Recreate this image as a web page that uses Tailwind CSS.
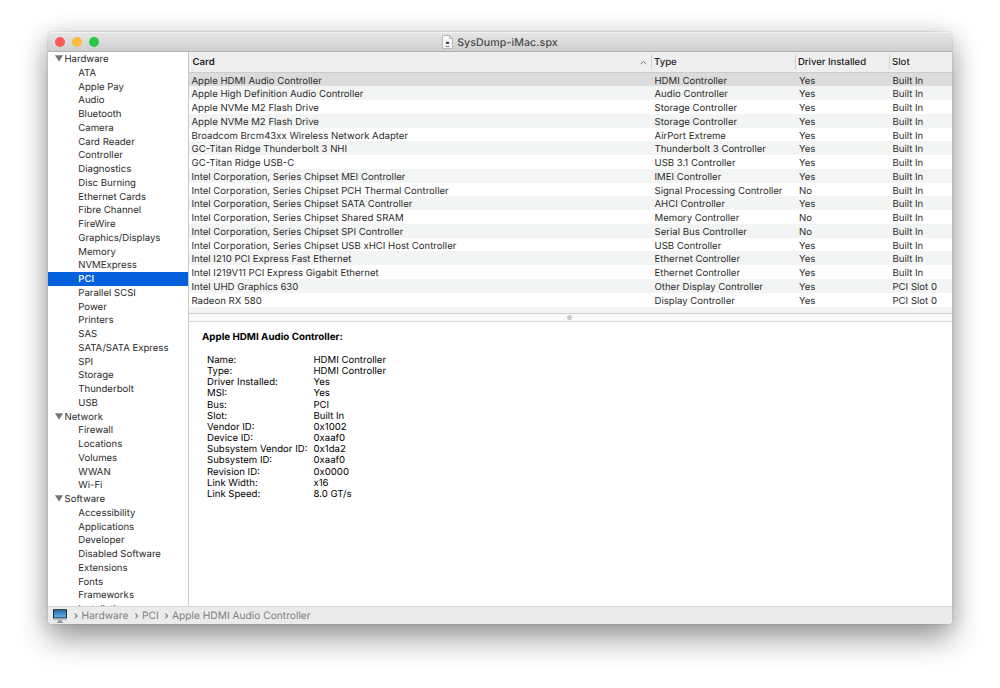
<!DOCTYPE html>
<html lang="en">
<head>
  <meta charset="UTF-8">
  <meta name="viewport" content="width=device-width, initial-scale=1.0">
  <title>SysDump-iMac.spx</title>
  <script src="https://cdn.jsdelivr.net/npm/@tailwindcss/browser@4"></script>
  <style>
    body {
      font-family: Inter, 'Liberation Sans', sans-serif;
      text-rendering: geometricPrecision;
    }
  </style>
</head>
<body class="bg-white w-[1000px] h-[688px] overflow-hidden pl-[48px] pt-[32px] text-[9.58px] text-[#2b2b2b]">
  <div class="w-[904px] h-[592px] rounded-[4px] shadow-[0_0_1px_rgba(0,0,0,0.55),0_0_22px_rgba(0,0,0,0.1),0_14px_30px_rgba(0,0,0,0.4)]">
    <div class="w-full h-full rounded-[4px] overflow-hidden bg-white flex flex-col">
      <header class="h-[20px] shrink-0 relative flex items-center justify-center gap-[4px] bg-linear-to-b from-[#e6e6e6] to-[#cfcfcf] border-t border-t-[#f3f3f3] border-b border-b-[#b1b1b1]">
        <div class="absolute left-[6.8px] top-[4px] flex gap-[6.7px]">
          <span class="size-[10.4px] rounded-full bg-[#fc5b57]"></span>
          <span class="size-[10.4px] rounded-full bg-[#fdbb40]"></span>
          <span class="size-[10.4px] rounded-full bg-[#2ac84a]"></span>
        </div>
        <svg class="w-[11px] h-[14px]" viewBox="0 0 11 14">
          <path d="M.5 .5h6.8l3.2 3.2v9.8H.5z" fill="#f8f8f8" stroke="#a8a8a8" stroke-width=".7"/>
          <path d="M7.3 .5v3.2h3.2z" fill="#cfcfcf" stroke="#a8a8a8" stroke-width=".5"/>
          <rect x="4" y="6.8" width="3" height="2" fill="#333"/>
          <path d="M3.6 11.5h4" stroke="#777" stroke-width="1"/>
        </svg>
        <h1 class="pt-[2px] text-[10.6px] font-medium text-[#4a4a4a] tracking-[0.1px]">SysDump-iMac.spx</h1>
      </header>

      <div class="flex-1 min-h-0 flex">
        <nav id="sidebar" class="w-[140px] shrink-0 overflow-hidden"></nav>

        <main class="flex-1 min-w-0 flex flex-col border-l border-[#c8c8c8]">
          <section class="h-[262px] shrink-0 overflow-hidden border-b border-[#cfcfcf]">
            <div class="h-[20.5px] flex items-center bg-[#efefef] border-b border-[#cccccc] font-medium text-[#222]">
              <div class="w-[462px] h-[15px] pt-[2px] pl-[3.5px] pr-[4px] flex items-center justify-between font-semibold">
                Card
                <svg class="w-[7px] h-[5px]" viewBox="0 0 7 5"><path d="M.7 4.2L3.5 1.2l2.8 3" fill="none" stroke="#777" stroke-width="1"/></svg>
              </div>
              <div class="w-[144px] h-[15px] pt-[2px] pl-[2px] flex items-center border-l border-[#d2d2d2]">Type</div>
              <div class="w-[94px] h-[15px] pt-[2px] pl-[2px] tracking-[-0.06px] flex items-center border-l border-[#d2d2d2]">Driver Installed</div>
              <div class="flex-1 h-[15px] pt-[2px] pl-[2px] flex items-center border-l border-[#d2d2d2]">Slot</div>
            </div>
            <div id="cards"></div>
          </section>
          <div class="h-[8px] shrink-0 flex justify-center pt-px pr-[2px] bg-[#fafafa] border-b border-[#d6d6d6]">
            <span class="size-[5px] rounded-full bg-[#c9c9c9]"></span>
          </div>
          <section class="flex-1 pl-[13px] pt-[8.5px] text-black">
            <h2 class="h-[14px] leading-[14px] text-[9.8px] font-bold">Apple HDMI Audio Controller:</h2>
            <dl id="details" class="pl-[5px] pt-[10.3px]"></dl>
          </section>
        </main>
      </div>

      <footer class="h-[18px] shrink-0 flex items-center pl-[5px] bg-[#ebebeb] border-t border-[#d5d5d5] text-[10.2px] text-[#808080]">
        <svg class="w-[14px] h-[14px] mr-[7px]" viewBox="0 0 14 14">
          <defs>
            <linearGradient id="screen" x1="0" y1="0" x2="0" y2="1">
              <stop offset="0" stop-color="#2471b5"/>
              <stop offset="1" stop-color="#5fb0e6"/>
            </linearGradient>
          </defs>
          <path d="M5.2 11h3.6l.5 2.3H4.7z" fill="#9b9b9b"/>
          <path d="M4 13.4h6" stroke="#858585" stroke-width=".9"/>
          <rect x="0" y=".3" width="14" height="11" rx=".6" fill="#c3c3c3"/>
          <rect x="0" y=".3" width="14" height="9" rx=".6" fill="#1b2129"/>
          <rect x=".9" y="1.2" width="12.2" height="7.3" fill="url(#screen)"/>
        </svg>
        <div class="flex pt-[2px]">
          <span class="w-[7.5px] text-[#555]">›</span><span class="w-[53px]">Hardware</span>
          <span class="w-[7.5px] text-[#555]">›</span><span class="w-[22.5px]">PCI</span>
          <span class="w-[7.5px] text-[#555]">›</span><span>Apple HDMI Audio Controller</span>
        </div>
      </footer>
    </div>
  </div>

  <script>
    const groups = [
      ['Hardware', ['ATA', 'Apple Pay', 'Audio', 'Bluetooth', 'Camera', 'Card Reader', 'Controller', 'Diagnostics', 'Disc Burning', 'Ethernet Cards', 'Fibre Channel', 'FireWire', 'Graphics/Displays', 'Memory', 'NVMExpress', 'PCI', 'Parallel SCSI', 'Power', 'Printers', 'SAS', 'SATA/SATA Express', 'SPI', 'Storage', 'Thunderbolt', 'USB']],
      ['Network', ['Firewall', 'Locations', 'Volumes', 'WWAN', 'Wi-Fi']],
      ['Software', ['Accessibility', 'Applications', 'Developer', 'Disabled Software', 'Extensions', 'Fonts', 'Frameworks', 'Installations']]
    ];
    const cards = [
      ['Apple HDMI Audio Controller', 'HDMI Controller', 'Yes', 'Built In'],
      ['Apple High Definition Audio Controller', 'Audio Controller', 'Yes', 'Built In'],
      ['Apple NVMe M2 Flash Drive', 'Storage Controller', 'Yes', 'Built In'],
      ['Apple NVMe M2 Flash Drive', 'Storage Controller', 'Yes', 'Built In'],
      ['Broadcom Brcm43xx Wireless Network Adapter', 'AirPort Extreme', 'Yes', 'Built In'],
      ['GC-Titan Ridge Thunderbolt 3 NHI', 'Thunderbolt 3 Controller', 'Yes', 'Built In'],
      ['GC-Titan Ridge USB-C', 'USB 3.1 Controller', 'Yes', 'Built In'],
      ['Intel Corporation, Series Chipset MEI Controller', 'IMEI Controller', 'Yes', 'Built In'],
      ['Intel Corporation, Series Chipset PCH Thermal Controller', 'Signal Processing Controller', 'No', 'Built In'],
      ['Intel Corporation, Series Chipset SATA Controller', 'AHCI Controller', 'Yes', 'Built In'],
      ['Intel Corporation, Series Chipset Shared SRAM', 'Memory Controller', 'No', 'Built In'],
      ['Intel Corporation, Series Chipset SPI Controller', 'Serial Bus Controller', 'No', 'Built In'],
      ['Intel Corporation, Series Chipset USB xHCI Host Controller', 'USB Controller', 'Yes', 'Built In'],
      ['Intel I210 PCI Express Fast Ethernet', 'Ethernet Controller', 'Yes', 'Built In'],
      ['Intel I219V11 PCI Express Gigabit Ethernet', 'Ethernet Controller', 'Yes', 'Built In'],
      ['Intel UHD Graphics 630', 'Other Display Controller', 'Yes', 'PCI Slot 0'],
      ['Radeon RX 580', 'Display Controller', 'Yes', 'PCI Slot 0'],
      ['', '', '', '']
    ];
    const details = [
      ['Name', 'HDMI Controller'], ['Type', 'HDMI Controller'], ['Driver Installed', 'Yes'], ['MSI', 'Yes'],
      ['Bus', 'PCI'], ['Slot', 'Built In'], ['Vendor ID', '0x1002'], ['Device ID', '0xaaf0'],
      ['Subsystem Vendor ID', '0x1da2'], ['Subsystem ID', '0xaaf0'], ['Revision ID', '0x0000'],
      ['Link Width', 'x16'], ['Link Speed', '8.0 GT/s']
    ];

    document.getElementById('sidebar').innerHTML = groups.map(([title, items]) => `
      <div class="h-[13.76px] leading-[15.6px] flex pl-[7px]">
        <svg class="w-[8px] h-[7px] mt-[3px] mr-[1.5px]" viewBox="0 0 8 7"><path d="M0 .3h8L4 6.7z" fill="#757575"/></svg>${title}
      </div>
      ${items.map(item => `<div class="h-[13.76px] leading-[15.6px] pl-[30.3px] whitespace-nowrap ${item === 'PCI' ? 'bg-[#0560dc] text-white font-medium' : ''}">${item}</div>`).join('')}
    `).join('');

    document.getElementById('cards').innerHTML = cards.map((row, i) => `
      <div class="h-[13.77px] leading-[17.2px] flex pl-[2.5px] whitespace-nowrap ${i === 0 ? 'bg-[#dcdcdc]' : i % 2 ? 'bg-[#f3f5f4]' : 'bg-white'}">
        <span class="w-[463px]">${row[0]}</span>
        <span class="w-[144.5px]">${row[1]}</span>
        <span class="w-[93.5px]">${row[2]}</span>
        <span>${row[3]}</span>
      </div>
    `).join('');

    document.getElementById('details').innerHTML = details.map(([name, value]) => `
      <div class="h-[11.19px] leading-[11.19px] flex whitespace-nowrap">
        <dt class="w-[106.5px]">${name}:</dt>
        <dd>${value}</dd>
      </div>
    `).join('');
  </script>
</body>
</html>
